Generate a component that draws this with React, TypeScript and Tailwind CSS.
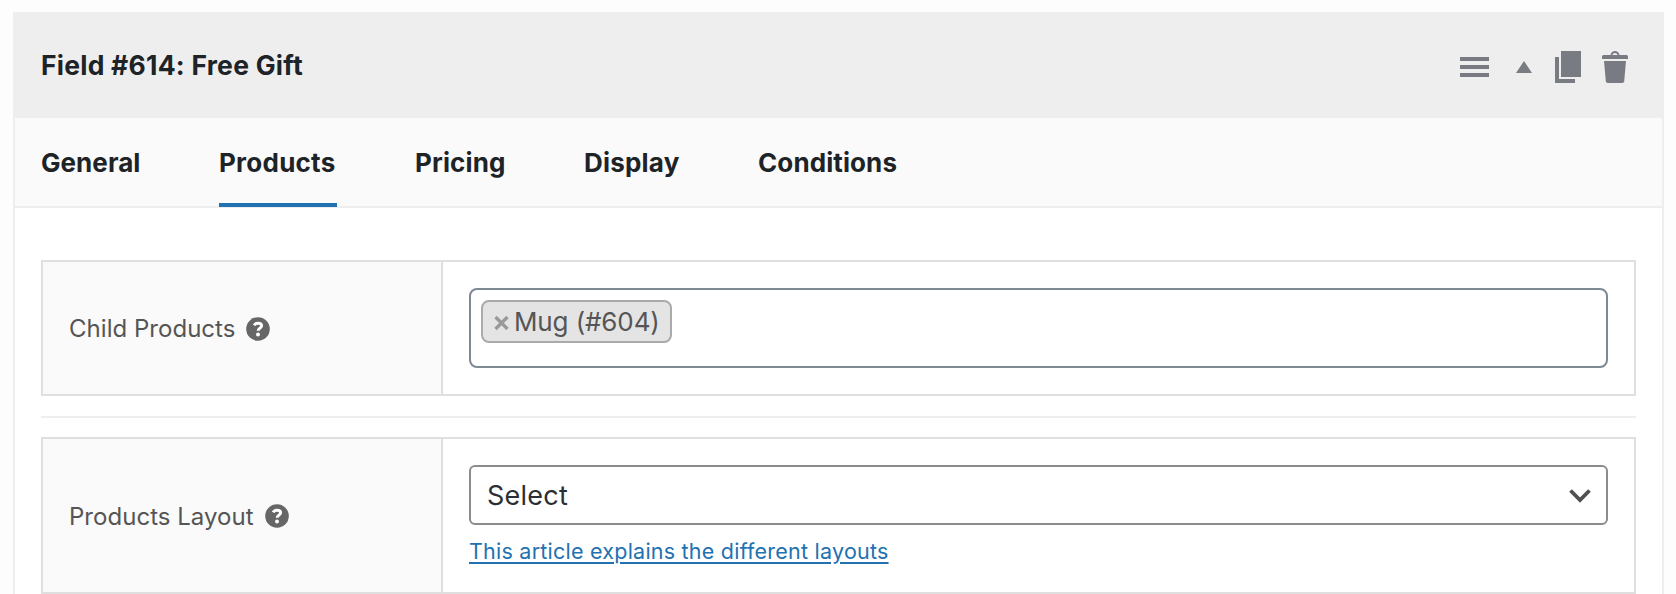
import { useState } from 'react';
import type { ReactNode } from 'react';

const tabs = [
  { id: 'general', label: 'General', className: 'w-[100px] tracking-[0.05px]' },
  { id: 'products', label: 'Products', className: 'w-[118px] tracking-[0.25px]' },
  { id: 'pricing', label: 'Pricing', className: 'w-[91px] tracking-[0.15px]' },
  { id: 'display', label: 'Display', className: 'w-[96px] tracking-[0.2px]' },
  { id: 'conditions', label: 'Conditions', className: 'w-[142px] tracking-[0.1px]' },
];

function MenuIcon() {
  return (
    <svg width="29" height="20" viewBox="0 0 29 20" fill="currentColor">
      <path d="M0 0h29v4H0zM0 8h29v4H0zM0 16h29v4H0z" />
    </svg>
  );
}

function CollapseIcon() {
  return (
    <svg width="16" height="12" viewBox="0 0 16 12" fill="currentColor">
      <path d="M8 0l8 12H0z" />
    </svg>
  );
}

function DuplicateIcon() {
  return (
    <svg width="26" height="32" viewBox="0 0 26 32" fill="currentColor">
      <path d="M6 0h20v26H6zM0 6h4v22h16v4H0z" />
    </svg>
  );
}

function TrashIcon() {
  return (
    <svg width="26" height="32" viewBox="0 0 26 32" fill="currentColor">
      <path d="M8.5 4C9 1.5 10.8 0 13 0s4 1.5 4.5 4h7q1.5 0 1.5 1.5V8H0V5.5Q0 4 1.5 4zM10.3 4h5.400C15.2 2.700 14.2 2 13 2s-2.200.7-2.700 2z" fillRule="evenodd" />
      <path d="M2 10h22l-1.8 20.2q-.2 1.800-2 1.800H5.800q-1.800 0-2-1.800z" />
    </svg>
  );
}

function HelpIcon() {
  return (
    <svg width="24" height="24" viewBox="0 0 24 24" className="shrink-0">
      <circle cx="12" cy="12" r="11.8" fill="#666" />
      <path
        d="M8.200 8.300C9 6.700 10.200 6.200 12 6.200c2.200 0 3.600.9 3.600 2.600 0 2.300-3.400 2.400-3.400 5"
        fill="none"
        stroke="#fff"
        strokeWidth="3"
      />
      <circle cx="12" cy="17.6" r="2" fill="#fff" />
    </svg>
  );
}

function FieldRow({ label, className, children }: { label: ReactNode; className: string; children: ReactNode }) {
  return (
    <div className={`flex border-2 border-[#dfdfdf] ${className}`}>
      <div className="flex w-[400px] shrink-0 items-center border-r-2 border-[#dfdfdf] bg-[#fafafa] pt-px pl-[26px] text-[#555]">
        {label}
        <HelpIcon />
      </div>
      <div className="flex-1 px-[26px] pt-[26px]">{children}</div>
    </div>
  );
}

export default function App() {
  const [activeTab, setActiveTab] = useState('products');

  return (
    <div className="h-[594px] overflow-hidden bg-[#fdfdfd] pt-3 pr-3 pl-[13px] font-['Inter','Liberation_Sans',sans-serif] whitespace-nowrap">
      <div className="h-[620px] border-x-2 border-[#eee] bg-white">
        {/* Header */}
        <header className="-mx-[2px] flex h-[106px] items-center justify-between bg-[#eee] pr-9 pl-7">
          <h2 className="text-[26.5px] leading-8 font-bold tracking-[0.24px] text-[#1d2327]">
            Field #614: Free Gift
          </h2>
          <div className="flex items-center text-[#787c82]">
            <button className="mr-[27px] pt-1"><MenuIcon /></button>
            <button className="mr-[23px] pt-1"><CollapseIcon /></button>
            <button className="mr-[21px] pt-1"><DuplicateIcon /></button>
            <button className="pt-1"><TrashIcon /></button>
          </div>
        </header>

        {/* Tabs */}
        <nav className="flex h-[90px] gap-[78px] border-b-2 border-[#eee] bg-[#fafafa] pl-[26px]">
          {tabs.map((tab) => (
            <button
              key={tab.id}
              onClick={() => setActiveTab(tab.id)}
              className={`h-[89px] border-b-4 pt-[3px] text-left text-[26px] font-bold text-[#1d2327] ${tab.className} ${
                activeTab === tab.id ? 'border-[#2271b1]' : 'border-transparent'
              }`}
            >
              {tab.label}
            </button>
          ))}
        </nav>

        {/* Settings */}
        <div className="px-[26px] pt-[52px]">
          <FieldRow
            className="h-[136px]"
            label={<span className="mr-[11px] text-[24px] tracking-[0.03px]">Child Products</span>}
          >
            <div className="h-20 rounded-lg border-2 border-[#7e8993] pt-[10px] pl-[10px]">
              <div className="flex h-[43px] w-[191px] items-center rounded-lg border-2 border-[#aaa] bg-[#e4e4e4] pl-[11px] text-[26px]">
                <svg width="15" height="14" viewBox="0 0 15 14" className="mt-[3px] mr-[5px] shrink-0">
                  <path d="M1.5 1l12 12M13.5 1l-12 12" stroke="#999" strokeWidth="3.4" />
                </svg>
                <span className="tracking-[-0.12px] text-[#555]">Mug (#604)</span>
              </div>
            </div>
          </FieldRow>

          <div className="mt-5 mb-[19px] h-[2px] bg-[#eee]" />

          <FieldRow
            className="h-[157px]"
            label={<span className="mr-[11px] pt-px text-[24px] tracking-[0.03px]">Products Layout</span>}
          >
            <div className="flex h-[60px] items-center justify-between rounded-md border-2 border-[#8c8c8c] pt-px pr-[14px] pl-4 text-[27px] text-[#2c2f32]">
              <span className="pt-px tracking-[0.25px]">Select</span>
              <svg width="24" height="16" viewBox="0 0 24 16">
                <path d="M2.500 2.500l9.500 9.500 9.500-9.500" fill="none" stroke="#505050" strokeWidth="3.800" />
              </svg>
            </div>
            <a
              href="#"
              className="mt-3 inline-block text-[21.5px] leading-7 tracking-[0.23px] text-[#2271b1] underline decoration-2 underline-offset-[3px]"
            >
              This article explains the different layouts
            </a>
          </FieldRow>
        </div>
      </div>
    </div>
  );
}
